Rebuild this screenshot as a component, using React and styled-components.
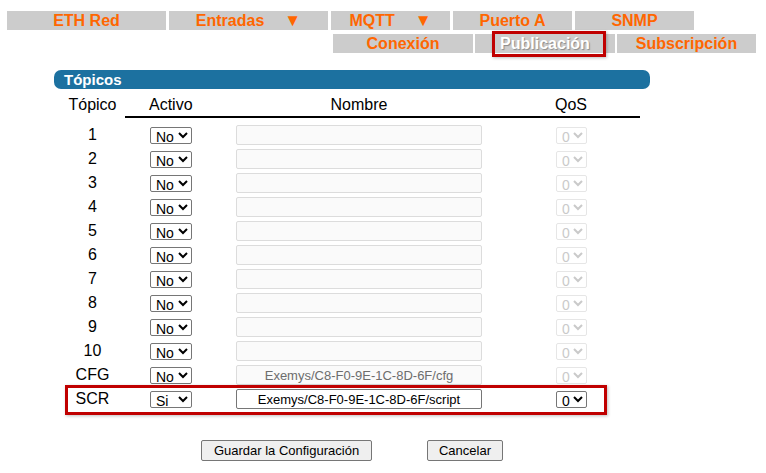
import React from 'react'
import styled, { createGlobalStyle } from 'styled-components'

const GlobalStyle = createGlobalStyle`
  body {
    margin: 0;
    background: #fff;
    font-family: "Liberation Sans", Arial, sans-serif;
  }
`

const menuTop = [
  { label: 'ETH Red', w: 159 },
  { label: 'Entradas', w: 159, arrow: true },
  { label: 'MQTT', w: 119, arrow: true },
  { label: 'Puerto A', w: 119 },
  { label: 'SNMP', w: 119 },
]

const menuSub = [
  { label: 'Conexión', w: 140 },
  { label: 'Publicación', w: 140, active: true },
  { label: 'Subscripción', w: 139 },
]

const topics = [
  ...Array.from({ length: 10 }, (_, i) => ({ id: String(i + 1), on: false, name: '' })),
  { id: 'CFG', on: false, name: 'Exemys/C8-F0-9E-1C-8D-6F/cfg' },
  { id: 'SCR', on: true, name: 'Exemys/C8-F0-9E-1C-8D-6F/script', mark: true },
]

const Page = styled.div`
  padding-top: 11px;
`

const MenuRow = styled.nav`
  display: flex;
  gap: ${(p) => p.$gap}px;
  margin-left: ${(p) => p.$left}px;
  margin-top: ${(p) => p.$top || 0}px;
`

const MenuItem = styled.div`
  position: relative;
  width: ${(p) => p.$w}px;
  height: 19px;
  line-height: 19px;
  background: #cccccc;
  text-align: center;
  font-weight: bold;
  font-size: 16px;
  color: ${(p) => (p.$active ? '#ffffff' : '#ff6600')};
  text-shadow: ${(p) => (p.$active ? '1px 1px 1px #8a8a8a' : 'none')};
`

const Arrow = styled.span`
  display: inline-block;
  margin-left: 20px;
  font-size: 17px;
`

const Highlight = styled.div`
  position: absolute;
  left: ${(p) => p.$x}px;
  top: ${(p) => p.$y}px;
  width: ${(p) => p.$w}px;
  height: ${(p) => p.$h}px;
  border: 3px solid #c00000;
  box-sizing: border-box;
  box-shadow: 1px 1px 3px rgba(0, 0, 0, 0.25);
  pointer-events: none;
`

const SectionBar = styled.div`
  margin: 17px 0 0 54px;
  width: 586px;
  height: 19px;
  line-height: 19px;
  padding-left: 10px;
  border-radius: 7px;
  background: #1c71a0;
  color: #fff;
  font-weight: bold;
  font-size: 15px;
`

const Table = styled.div`
  margin-left: 60px;
  width: 580px;
`

const Row = styled.div`
  position: relative;
  display: grid;
  grid-template-columns: 65px 101px 266px 148px;
  align-items: center;
  height: ${(p) => (p.$head ? 29 : 24)}px;
  margin-bottom: ${(p) => (p.$head ? 5 : 0)}px;
  font-size: 16px;
  color: #000;
`

const HeadCell = styled.div`
  align-self: end;
  height: 29px;
  box-sizing: border-box;
  padding: 6px 0 0 ${(p) => p.$pad || 0}px;
  line-height: 20px;
  text-align: ${(p) => p.$align || 'left'};
  border-bottom: ${(p) => (p.$line ? '2px solid #000' : '2px solid transparent')};
`

const Cell = styled.div`
  display: flex;
  align-items: center;
  justify-content: ${(p) => (p.$center ? 'center' : 'flex-start')};
  padding-left: ${(p) => p.$pad || 0}px;
`

const Select = styled.select`
  width: ${(p) => p.$w}px;
  height: 17px;
  padding: 0 0 0 1px;
  font-family: "Liberation Sans", Arial, sans-serif;
  font-size: 14px;
  color: #000;
  background: #fff;
  border: 1px solid #767676;
  border-radius: 2px;

  &:disabled {
    color: #b4b4b4;
    border-color: #dcdcdc;
    background: #fff;
  }
`

const TextInput = styled.input`
  width: 246px;
  height: 20px;
  box-sizing: border-box;
  padding: 0 2px;
  font-family: "Liberation Sans", Arial, sans-serif;
  font-size: 13px;
  text-align: center;
  color: #000;
  background: #fff;
  border: 1px solid #767676;
  border-radius: 2px;

  &:disabled {
    color: #6d6d6d;
    background: #fafafa;
    border-color: #dcdcdc;
  }
`

const Actions = styled.div`
  display: flex;
  justify-content: center;
  gap: 55px;
  width: 596px;
  margin: 29px 0 0 54px;
`

const Button = styled.button`
  width: ${(p) => p.$w}px;
  height: 21px;
  padding: 0;
  font-family: "Liberation Sans", Arial, sans-serif;
  font-size: 13px;
  color: #000;
  background: #efefef;
  border: 1px solid #767676;
  border-radius: 2px;
`

const App = () => {
  return (
    <Page>
      <GlobalStyle />
      <MenuRow $left={7} $gap={3}>
        {menuTop.map((m) => (
          <MenuItem key={m.label} $w={m.w}>
            {m.label}
            {m.arrow && <Arrow>▼</Arrow>}
          </MenuItem>
        ))}
      </MenuRow>
      <MenuRow $left={333} $gap={2} $top={4}>
        {menuSub.map((m) => (
          <MenuItem key={m.label} $w={m.w} $active={m.active}>
            {m.label}
            {m.active && <Highlight $x={17} $y={-3} $w={114} $h={26} />}
          </MenuItem>
        ))}
      </MenuRow>

      <SectionBar>Tópicos</SectionBar>

      <Table>
        <Row $head>
          <HeadCell $align="center">Tópico</HeadCell>
          <HeadCell $line $pad={24}>Activo</HeadCell>
          <HeadCell $line $align="center">Nombre</HeadCell>
          <HeadCell $line $pad={63}>QoS</HeadCell>
        </Row>
        {topics.map((t) => (
          <Row key={t.id}>
            <Cell $center>{t.id}</Cell>
            <Cell $pad={25}>
              <Select $w={42} defaultValue={t.on ? 'si' : 'no'}>
                <option value="no">No</option>
                <option value="si">Si</option>
              </Select>
            </Cell>
            <Cell $pad={10}>
              <TextInput defaultValue={t.name} disabled={!t.on} />
            </Cell>
            <Cell $pad={64}>
              <Select $w={31} disabled={!t.on} defaultValue="0">
                <option value="0">0</option>
                <option value="1">1</option>
                <option value="2">2</option>
              </Select>
            </Cell>
            {t.mark && <Highlight $x={5} $y={-2} $w={542} $h={30} />}
          </Row>
        ))}
      </Table>

      <Actions>
        <Button $w={171}>Guardar la Configuración</Button>
        <Button $w={76}>Cancelar</Button>
      </Actions>
    </Page>
  )
}

export default App
